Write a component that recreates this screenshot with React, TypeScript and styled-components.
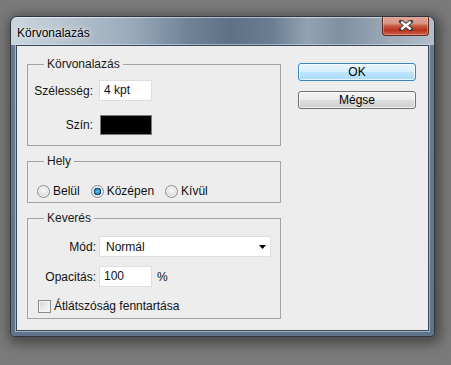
import styled, { createGlobalStyle } from 'styled-components'

const GlobalStyle = createGlobalStyle`
  html, body {
    margin: 0;
    padding: 0;
    background: #7a7a7a;
    height: 100%;
    overflow: hidden;
  }
  body {
    font-family: "Liberation Sans", Arial, sans-serif;
    font-size: 11.5px;
    color: #111;
  }
`

const App = () => {
  return (
    <>
      <GlobalStyle />
      <Window>
        <TitleBar>
          <Title>{'Körvonalazás'}</Title>
          <CloseBtn>
            <svg width="14" height="11" viewBox="0 0 14 11">
              <path d="M2 1.5 L12 9.5 M12 1.5 L2 9.5" stroke="#3b3b3b" strokeWidth="4.2" strokeLinecap="square" />
              <path d="M2.3 1.8 L11.7 9.2 M11.7 1.8 L2.3 9.2" stroke="#fff" strokeWidth="2.4" strokeLinecap="butt" />
            </svg>
          </CloseBtn>
        </TitleBar>
        <Frame>
          <Client>
            <LeftCol>
              <Group>
                <Legend>{'Körvonalazás'}</Legend>
                <FormGrid $label={65} $gap={6} $rowGap={14} $pt={9} $pb={10}>
                  <Label>{'Szélesség:'}</Label>
                  <TextBox>{'4 kpt'}</TextBox>
                  <Label>{'Szín:'}</Label>
                  <Swatch />
                </FormGrid>
              </Group>

              <Group>
                <Legend>{'Hely'}</Legend>
                <RadioRow>
                  <RadioItem>
                    <Radio />
                    {'Belül'}
                  </RadioItem>
                  <RadioItem>
                    <Radio $checked />
                    {'Középen'}
                  </RadioItem>
                  <RadioItem>
                    <Radio />
                    {'Kívül'}
                  </RadioItem>
                </RadioRow>
              </Group>

              <Group>
                <Legend>{'Keverés'}</Legend>
                <FormGrid $label={68} $gap={3} $rowGap={9} $pt={11} $pb={0}>
                  <Label>{'Mód:'}</Label>
                  <Select>
                    {'Normál'}
                    <svg width="7" height="4" viewBox="0 0 7 4">
                      <polygon points="0,0 7,0 3.5,4" fill="#000" />
                    </svg>
                  </Select>
                  <Label>{'Opacitás:'}</Label>
                  <Inline>
                    <TextBox>{'100'}</TextBox>
                    <Unit>{'%'}</Unit>
                  </Inline>
                </FormGrid>
                <CheckRow>
                  <Check />
                  {'Átlátszóság fenntartása'}
                </CheckRow>
              </Group>
            </LeftCol>

            <RightCol>
              <Btn $primary>{'OK'}</Btn>
              <Btn>{'Mégse'}</Btn>
            </RightCol>
          </Client>
        </Frame>
      </Window>
    </>
  )
}

const Window = styled.div`
  margin: 16px 0 0 10px;
  width: 425px;
  height: 321px;
  box-sizing: border-box;
  border: 1px solid #2e3540;
  border-radius: 7px 7px 5px 5px;
  background: #687d93;
  box-shadow: 2px 3px 12px 4px rgba(0, 0, 0, 0.4);
  display: flex;
  flex-direction: column;
  overflow: hidden;
`

const TitleBar = styled.div`
  height: 28px;
  display: flex;
  justify-content: space-between;
  padding: 0 5px 0 6px;
  background: linear-gradient(
    90deg,
    #cbd5de 0%,
    #b9c5d0 12%,
    #9babbb 28%,
    #6f8398 42%,
    #5d7187 52%,
    #6b7f94 62%,
    #93a2b2 70%,
    #7f90a2 78%,
    #9eabb8 90%,
    #b3bec9 100%
  );
  box-shadow: inset 0 1px 0 rgba(255, 255, 255, 0.55);
`

const Title = styled.div`
  align-self: center;
  font-size: 12px;
  color: #000;
  padding-top: 3px;
  text-shadow: 0 0 6px rgba(255, 255, 255, 0.9), 0 0 2px rgba(255, 255, 255, 0.7);
`

const CloseBtn = styled.div`
  width: 47px;
  height: 20px;
  box-sizing: border-box;
  margin-top: -1px;
  border: 1px solid #5e2a22;
  border-top: none;
  border-radius: 0 0 4px 4px;
  background: linear-gradient(
    180deg,
    #e4aa9c 0%,
    #d89282 40%,
    #c65a44 52%,
    #b8321c 75%,
    #d2604a 100%
  );
  box-shadow: inset 0 0 0 1px rgba(255, 220, 210, 0.35);
  display: flex;
  align-items: center;
  justify-content: center;
`

const Frame = styled.div`
  flex: 1;
  padding: 0 5px 5px;
  background: linear-gradient(180deg, #677c93 0%, #5f748b 100%);
  display: flex;
`

const Client = styled.div`
  flex: 1;
  box-sizing: border-box;
  border: 1px solid #38475a;
  box-shadow: 0 0 0 1px rgba(220, 228, 236, 0.55);
  background: #ededed;
  display: flex;
  gap: 17px;
  padding: 11px 0 0 10px;
`

const LeftCol = styled.div`
  width: 254px;
  display: flex;
  flex-direction: column;
  gap: 8px;
`

const RightCol = styled.div`
  width: 118px;
  display: flex;
  flex-direction: column;
  gap: 10px;
  margin-top: 6px;
`

const Group = styled.fieldset`
  margin: 0;
  padding: 0;
  border: 1px solid #a3a3a3;
  min-width: 0;
`

const Legend = styled.legend`
  margin-left: 16px;
  padding: 0 3px;
  line-height: 14px;
  font-size: 12px;
  color: #1a1a1a;
`

const FormGrid = styled.div<{ $label: number; $gap: number; $rowGap: number; $pt: number; $pb: number }>`
  display: grid;
  grid-template-columns: ${(p) => p.$label}px auto;
  column-gap: ${(p) => p.$gap}px;
  row-gap: ${(p) => p.$rowGap}px;
  align-items: center;
  justify-items: start;
  padding: ${(p) => p.$pt}px 0 ${(p) => p.$pb}px;
`

const Label = styled.span`
  justify-self: end;
  font-size: 12px;
`

const TextBox = styled.div`
  width: 53px;
  height: 21px;
  box-sizing: border-box;
  background: #fff;
  border: 1px solid #dedede;
  padding: 0 4px;
  font-size: 12px;
  line-height: 19px;
`

const Swatch = styled.div`
  width: 52px;
  height: 20px;
  margin-left: 1px;
  box-sizing: border-box;
  background: #000;
  border: 1px solid #7c7c7c;
`

const Select = styled.div`
  width: 172px;
  height: 21px;
  box-sizing: border-box;
  background: #fff;
  border: 1px solid #dedede;
  padding: 0 4px 0 6px;
  font-size: 12px;
  display: flex;
  align-items: center;
  justify-content: space-between;
`

const Inline = styled.div`
  display: flex;
  align-items: center;
  gap: 5px;
`

const Unit = styled.span`
  font-size: 12px;
`

const RadioRow = styled.div`
  display: flex;
  align-items: center;
  gap: 11px;
  height: 16px;
  padding: 15px 0 3px 9px;
`

const RadioItem = styled.label`
  display: flex;
  align-items: center;
  gap: 3px;
  font-size: 12px;
`

const Radio = styled.span<{ $checked?: boolean }>`
  width: 13px;
  height: 13px;
  box-sizing: border-box;
  border-radius: 50%;
  border: 1px solid #8c8c8c;
  background: ${(p) =>
    p.$checked
      ? 'radial-gradient(circle, #6fd0f6 0%, #2a8fd0 28%, #1b4f7e 40%, #2b4a66 46%, #e6e6e6 52%, #d0d0d0 100%)'
      : 'radial-gradient(circle at 50% 40%, #f7f7f7 0%, #e2e2e2 55%, #cfcfcf 100%)'};
  box-shadow: inset 0 0 0 1px rgba(255, 255, 255, 0.5);
`

const CheckRow = styled.label`
  display: flex;
  align-items: center;
  gap: 3px;
  margin: 12px 0 5px 10px;
  font-size: 12px;
  height: 14px;
`

const Check = styled.span`
  width: 13px;
  height: 13px;
  box-sizing: border-box;
  border: 1px solid #8c8c8c;
  background: linear-gradient(135deg, #d4d4d4 0%, #eeeeee 60%, #fafafa 100%);
  box-shadow: inset 0 0 0 1px #f4f4f4;
`

const Btn = styled.div<{ $primary?: boolean }>`
  height: 18px;
  box-sizing: border-box;
  border-radius: 3px;
  border: 1px solid ${(p) => (p.$primary ? '#3a84c0' : '#707070')};
  background: ${(p) =>
    p.$primary
      ? 'linear-gradient(180deg, #e6f5fd 0%, #d6effc 50%, #bde5fb 52%, #a9dbf7 100%)'
      : 'linear-gradient(180deg, #f3f3f3 0%, #ebebeb 50%, #dddddd 52%, #cfcfcf 100%)'};
  box-shadow: inset 0 0 0 1px rgba(255, 255, 255, 0.7);
  font-size: 12px;
  display: flex;
  align-items: center;
  justify-content: center;
  color: #000;
`

export default App
